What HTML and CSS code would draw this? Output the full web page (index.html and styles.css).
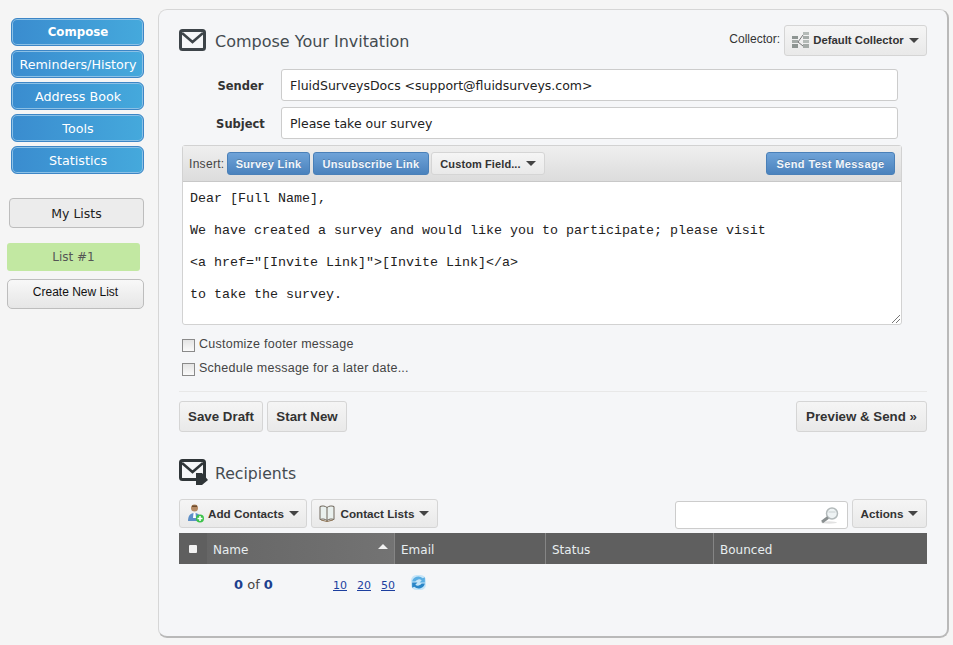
FILE: index.html
```html
<!DOCTYPE html>
<html lang="en">
<head>
<meta charset="utf-8">
<title>Compose Your Invitation</title>
<link rel="stylesheet" href="styles.css">
</head>
<body>
<div class="page">
  <aside class="sidebar">
    <nav class="nav">
      <a class="nav-btn nav-active">Compose</a>
      <a class="nav-btn">Reminders/History</a>
      <a class="nav-btn">Address Book</a>
      <a class="nav-btn">Tools</a>
      <a class="nav-btn">Statistics</a>
    </nav>
    <div class="mylists">My Lists</div>
    <div class="list-item">List #1</div>
    <div class="create-list">Create New List</div>
  </aside>
  <main class="panel">
    <header class="head-row">
      <div class="title-wrap">
        <svg class="env" width="28" height="23" viewBox="0 0 28 23"><rect x="1.5" y="1.5" width="24" height="19" rx="2" fill="#f5f6f8" stroke="#3d4449" stroke-width="3"/><path d="M3 4l10.500 9L24 4" fill="none" stroke="#3d4449" stroke-width="2.500"/></svg>
        <h1 class="title title-main">Compose Your Invitation</h1>
      </div>
      <div class="collector">
        <span class="collector-label">Collector:</span>
        <button class="btn btn-collector">
          <svg class="ico" width="17" height="17" viewBox="0 0 17 17"><rect x="0" y="4" width="6" height="3" fill="#8d9491"/><rect x="0" y="8" width="6" height="3" fill="#a4aaa7"/><rect x="0" y="12" width="6" height="4" fill="#8d9491"/><rect x="11" y="0" width="6" height="3" fill="#b4bab7"/><rect x="11" y="4" width="6" height="3" fill="#a4aaa7"/><rect x="11" y="8" width="6" height="3" fill="#b4bab7"/><rect x="11" y="12" width="6" height="4" fill="#a4aaa7"/><path d="M6 10L11 3M6 10l5 4" stroke="#777" fill="none"/></svg>
          Default Collector<i class="caret"></i>
        </button>
      </div>
    </header>
    <div class="field"><label class="field-label">Sender</label><div class="field-input">FluidSurveysDocs &lt;support@fluidsurveys.com&gt;</div></div>
    <div class="field"><label class="field-label">Subject</label><div class="field-input">Please take our survey</div></div>
    <section class="editor">
      <div class="editor-bar">
        <span class="insert">Insert:</span>
        <button class="btn-blue btn-survey">Survey Link</button>
        <button class="btn-blue btn-unsub">Unsubscribe Link</button>
        <button class="btn btn-custom">Custom Field...<i class="caret"></i></button>
        <button class="btn-blue btn-test">Send Test Message</button>
      </div>
      <div class="editor-body">
        <p>Dear [Full Name],</p>
        <p>We have created a survey and would like you to participate; please visit</p>
        <p>&lt;a href="[Invite Link]"&gt;[Invite Link]&lt;/a&gt;</p>
        <p>to take the survey.</p>
        <svg class="grip" width="8" height="8" viewBox="0 0 8 8"><path d="M8 0L0 8M8 4L4 8" stroke="#777" fill="none"/></svg>
      </div>
    </section>
    <div class="check-row"><span class="check"></span><span>Customize footer message</span></div>
    <div class="check-row check-second"><span class="check"></span><span>Schedule message for a later date...</span></div>
    <div class="actions">
      <div class="actions-left">
        <button class="btn btn-lg btn-draft">Save Draft</button>
        <button class="btn btn-lg btn-new">Start New</button>
      </div>
      <button class="btn btn-lg btn-preview">Preview &amp; Send »</button>
    </div>
    <div class="title-wrap recipients-head">
      <svg class="env" width="30" height="27" viewBox="0 0 30 27"><rect x="1.500" y="1.500" width="24" height="19" rx="2" fill="#f5f6f8" stroke="#2f3538" stroke-width="3"/><path d="M3 4l10.500 9L24 4" fill="none" stroke="#2f3538" stroke-width="2.500"/><path d="M17 14h6l6 7-6 5h-6z" fill="#2f3538"/></svg>
      <h2 class="title">Recipients</h2>
    </div>
    <div class="tools">
      <div class="tools-left">
        <button class="btn btn-tool">
          <svg class="ico" width="17" height="19" viewBox="0 0 17 19"><circle cx="7.500" cy="4" r="3.500" fill="#b58a63"/><path d="M5 1.500h5V3H5z" fill="#6b4a2c"/><path d="M1 17c0-6 3-8 6.500-8s6.500 2 6.500 8z" fill="#5d8fc7"/><path d="M6.500 9h2l.5 5H6z" fill="#fff"/><circle cx="13" cy="14.500" r="4" fill="#3cc24a"/><path d="M13 12v5M10.500 14.500h5" stroke="#fff" stroke-width="1.500"/></svg>
          Add Contacts<i class="caret"></i>
        </button>
        <button class="btn btn-tool btn-lists">
          <svg class="ico" width="17" height="17" viewBox="0 0 17 17"><path d="M1 1.500c3-1 5-.500 7 1 2-1.500 4-2 7-1v13c-3-1-5-.500-7 1-2-1.500-4-2-7-1z" fill="#e9f0ee" stroke="#6d655a"/><path d="M8 2.500v13" stroke="#6d655a"/><path d="M2 15l6 1.500 6-1.500" stroke="#8a6f4f" fill="none"/></svg>
          Contact Lists<i class="caret"></i>
        </button>
      </div>
      <div class="tools-right">
        <div class="search">
          <svg width="19" height="17" viewBox="0 0 19 17"><ellipse cx="9" cy="15.500" rx="8" ry="1.200" fill="#e2e2e2"/><circle cx="12" cy="6.500" r="5.500" fill="#eef3f4" stroke="#b3babb" stroke-width="1.500"/><path d="M8 10.500L2 15" stroke="#8a9091" stroke-width="3"/><path d="M8.500 5h7" stroke="#c9d0d1"/></svg>
        </div>
        <button class="btn btn-tool btn-actions">Actions<i class="caret"></i></button>
      </div>
    </div>
    <div class="thead">
      <div class="th th-check"><span class="th-box"></span></div>
      <div class="th th-name">Name<i class="sort-up"></i></div>
      <div class="th th-email">Email</div>
      <div class="th th-status">Status</div>
      <div class="th th-bounced">Bounced</div>
    </div>
    <div class="pager">
      <span class="count"><b>0</b> of <b>0</b></span>
      <span class="pages"><a>10</a><a>20</a><a>50</a></span>
      <svg class="refresh" width="17" height="17" viewBox="0 0 16 16"><rect x="1" y="1" width="14" height="14" rx="5" fill="#c6e5f8"/><path d="M2 7a6 6 0 0 1 10-3l2-1v5H9l2-2a4 4 0 0 0-6 1z" fill="#5aaee3"/><path d="M14 9a6 6 0 0 1-10 3l-2 1V8h5L5 10a4 4 0 0 0 6-1z" fill="#2a86c8"/></svg>
    </div>
  </main>
</div>
</body>
</html>
```

FILE: styles.css
```css
* { box-sizing: border-box; }
html, body { margin: 0; padding: 0; }
body {
  width: 953px;
  height: 645px;
  overflow: hidden;
  background: #f5f5f5;
  font-family: "DejaVu Sans", Verdana, sans-serif;
  color: #333;
}
.page { display: flex; align-items: flex-start; }

.sidebar { width: 158px; flex: none; padding: 18px 0 0 7px; }
.nav { display: flex; flex-direction: column; gap: 4px; margin-left: 4px; width: 133px; }
.nav-btn {
  height: 28px;
  padding-left: 1px;
  border: 1px solid #3d86c6;
  border-radius: 6px;
  box-shadow: inset 0 0 0 1px #8cc1e6;
  background: linear-gradient(90deg, #3a8ccf, #45a9dc);
  color: #fff;
  font-size: 12.700px;
  line-height: 27px;
  text-align: center;
  white-space: nowrap;
}
.nav-active { font-weight: bold; font-size: 11.800px; }
.mylists {
  margin: 24px 0 0 2px;
  width: 135px;
  height: 30px;
  border: 1px solid #bdbdbd;
  border-radius: 4px;
  background: #ececec;
  color: #222;
  font-size: 12.500px;
  line-height: 29px;
  text-align: center;
}
.list-item {
  margin-top: 15px;
  width: 133px;
  height: 28px;
  border-radius: 3px;
  background: #c2e8a2;
  color: #555;
  font-size: 12px;
  line-height: 29px;
  text-align: center;
}
.create-list {
  margin-top: 8px;
  width: 137px;
  height: 30px;
  border: 1px solid #bdbdbd;
  border-radius: 5px;
  background: linear-gradient(#f8f8f8, #e6e6e6);
  color: #111;
  font-family: "Liberation Sans", Arial, sans-serif;
  font-size: 12px;
  line-height: 25px;
  text-align: center;
}

.panel {
  margin-top: 9px;
  width: 791px;
  height: 629px;
  padding: 15px 20px 0 20px;
  background: #f5f6f8;
  border: 1px solid #d6d6d6;
  border-right: 2px solid #b9b9b9;
  border-bottom: 2px solid #b9b9b9;
  border-radius: 9px;
}
.head-row { display: flex; justify-content: space-between; align-items: center; height: 30px; }
.title-wrap { display: flex; align-items: center; }
.env { flex: none; }
.title {
  margin: 0 0 0 8px;
  font-size: 16px;
  font-weight: normal;
  color: #444b50;
  line-height: 22px;
}
.title-main { margin-top: 4px; }
.collector { display: flex; align-items: center; gap: 3px; }
.collector-label {
  font-family: "Liberation Sans", Arial, sans-serif;
  font-size: 12px;
  color: #333;
  position: relative;
  top: -1px;
  left: -1px;
}
.btn {
  display: inline-flex;
  align-items: center;
  justify-content: center;
  border: 1px solid #d5d5d5;
  border-radius: 3px;
  background: linear-gradient(#f5f5f5, #e9e9e9);
  font-family: "Liberation Sans", Arial, sans-serif;
  font-weight: bold;
  color: #333;
  padding: 0;
  white-space: nowrap;
}
.btn-collector { width: 143px; height: 31px; font-size: 11.300px; }
.ico { flex: none; margin-right: 4px; }
.caret {
  display: inline-block;
  margin-left: 5px;
  border-left: 5px solid transparent;
  border-right: 5px solid transparent;
  border-top: 5px solid #444;
}

.field { display: flex; align-items: center; height: 32px; margin-top: 6px; }
.head-row + .field { margin-top: 14px; }
.field-label {
  width: 102px;
  padding: 2px 0 0 21px;
  text-align: center;
  font-size: 11.500px;
  font-weight: bold;
  color: #333;
  font-family: "DejaVu Sans", Verdana, sans-serif;
}
.field-input {
  width: 617px;
  height: 32px;
  border: 1px solid #ccc;
  border-radius: 3px;
  background: #fff;
  padding-left: 8px;
  font-size: 12.500px;
  line-height: 32px;
  color: #222;
}

.editor {
  margin: 6px 0 0 3px;
  width: 720px;
  height: 180px;
  border: 1px solid #d2d2d2;
  border-radius: 3px;
}
.editor-bar {
  position: relative;
  display: flex;
  align-items: center;
  height: 36px;
  padding-left: 6px;
  background: linear-gradient(#efefef, #dcdcdc);
  border-bottom: 1px solid #c8c8c8;
}
.insert {
  font-family: "Liberation Sans", Arial, sans-serif;
  font-size: 12px;
  letter-spacing: 0.3px;
  color: #444;
  width: 38px;
  white-space: nowrap;
}
.btn-blue {
  height: 23px;
  padding: 0;
  border: 1px solid #4a80b8;
  border-radius: 3px;
  background: linear-gradient(#6fa3d8, #4a82bd);
  color: #f2f6fb;
  font-family: "Liberation Sans", Arial, sans-serif;
  font-size: 11px;
  font-weight: bold;
  white-space: nowrap;
  letter-spacing: 0.3px;
  text-shadow: 0 -1px 0 rgba(0, 0, 0, 0.2);
}
.btn-survey { width: 83px; margin-right: 3px; }
.btn-unsub { width: 116px; margin-right: 2px; }
.btn-custom { width: 114px; height: 23px; font-size: 11px; letter-spacing: 0.1px; }
.btn-test { position: absolute; right: 6px; top: 6px; width: 129px; letter-spacing: 0.4px; }
.editor-body {
  position: relative;
  height: 142px;
  background: #fff;
  padding: 9px 7px 0;
  font-family: "Liberation Mono", "Courier New", monospace;
  font-size: 13.333px;
  color: #222;
  border-radius: 0 0 3px 3px;
}
.editor-body p { margin: 0 0 17px; line-height: 15px; height: 15px; white-space: nowrap; }
.grip { position: absolute; right: 1px; bottom: 1px; }

.check-row {
  display: flex;
  align-items: flex-start;
  margin: 11px 0 0 3px;
  font-family: "Liberation Sans", Arial, sans-serif;
  font-size: 12.500px;
  letter-spacing: 0.25px;
  color: #444;
  height: 16px;
  line-height: 16px;
}
.check-row.check-second { margin-top: 8px; }
.check {
  width: 13px;
  height: 13px;
  margin: 3px 4px 0 0;
  border: 1px solid #8a8a8a;
  background: linear-gradient(#e4e4e4, #fafafa);
  flex: none;
}
.actions {
  display: flex;
  justify-content: space-between;
  margin-top: 15px;
  padding-top: 9px;
  border-top: 1px solid #e8e8e8;
}
.actions-left { display: flex; gap: 4px; }
.btn-lg { height: 31px; padding: 0 0 1px; font-size: 13.300px; }
.btn-draft { width: 84px; }
.btn-new { width: 80px; }
.btn-preview { width: 131px; }
.recipients-head { margin-top: 27px; height: 27px; }
.recipients-head .title { margin-left: 6px; margin-top: 2px; font-size: 15.700px; }
.tools { display: flex; justify-content: space-between; margin-top: 13px; }
.tools-left, .tools-right { display: flex; gap: 4px; }
.btn-tool { height: 29px; padding: 0 7px; font-size: 11.700px; }
.btn-lists { width: 127px; }
.btn-actions { width: 75px; }
.search {
  display: flex;
  align-items: center;
  justify-content: flex-end;
  width: 173px;
  height: 28px;
  margin-top: 2px;
  padding-right: 8px;
  background: #fff;
  border: 1px solid #ccc;
  border-radius: 3px;
}
.thead {
  display: flex;
  height: 31px;
  margin-top: 4px;
  background: #5f5f5f;
  color: #e8eef0;
  font-size: 12px;
  line-height: 34px;
}
.th { padding-left: 6px; border-right: 1px solid #858585; position: relative; }
.th-check { width: 28px; padding: 0; display: flex; align-items: center; justify-content: center; border-right: 0; }
.th-box { width: 8px; height: 8px; background: #f2f2f2; border-radius: 1px; }
.th-name { width: 188px; background: linear-gradient(90deg, #666, #737373); }
.sort-up {
  position: absolute;
  right: 6px;
  top: 11px;
  border-left: 5px solid transparent;
  border-right: 5px solid transparent;
  border-bottom: 5px solid #f2f2f2;
}
.th-email { width: 151px; }
.th-status { width: 168px; }
.th-bounced { flex: 1; border-right: 0; }
.pager {
  display: flex;
  align-items: flex-start;
  padding-top: 11px;
  font-size: 12px;
  color: #444;
  position: relative;
}
.count { width: 154px; padding: 1px 0 0 55px; white-space: nowrap; line-height: 17px; font-size: 13px; }
.count b { color: #1c3f8f; }
.pages { display: flex; gap: 10px; width: 77px; font-size: 11px; line-height: 21px; }
.pages a { color: #1c3f9f; text-decoration: underline; }
.refresh { margin-top: -1px; }
```
